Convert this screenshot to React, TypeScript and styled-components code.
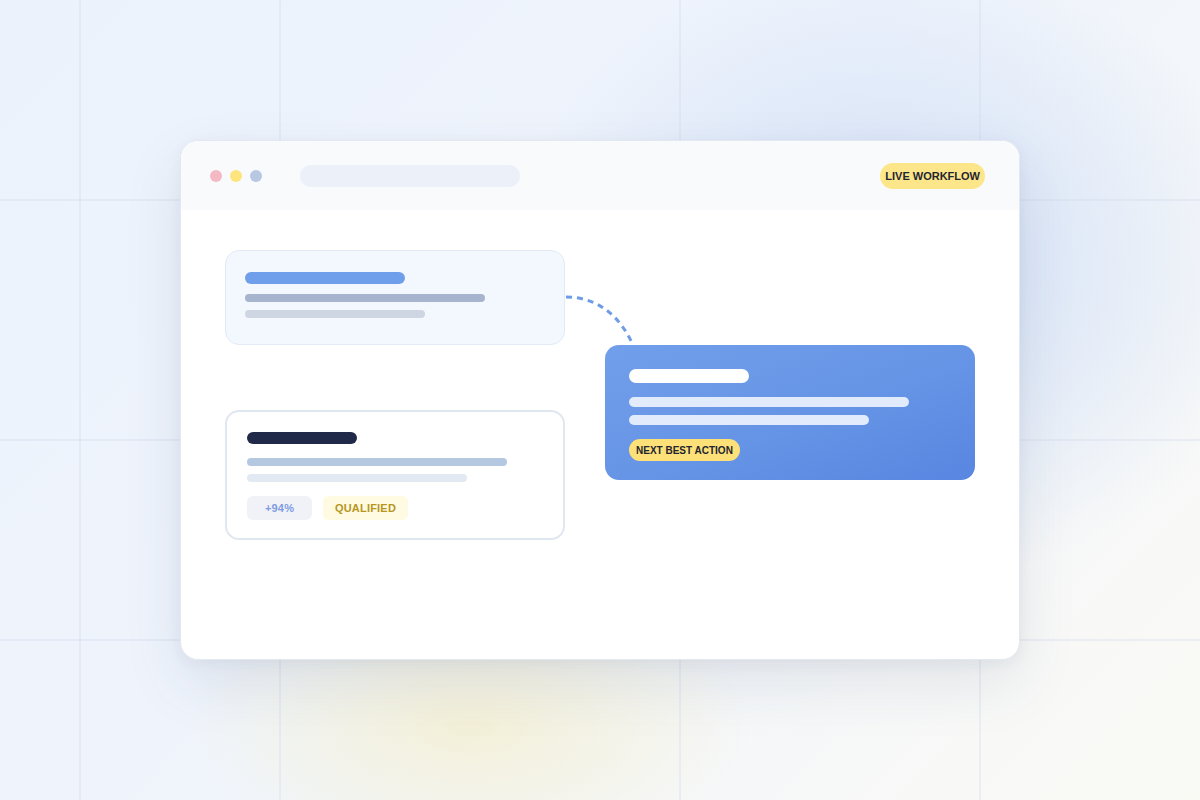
import React from 'react';
import styled, { createGlobalStyle } from 'styled-components';

const GlobalStyle = createGlobalStyle`
  html, body {
    margin: 0;
    padding: 0;
  }
  body {
    font-family: "Liberation Sans", Arial, sans-serif;
  }
`;

const gridLine = (dir: 'right' | 'bottom', at: number) =>
  `linear-gradient(to ${dir}, transparent ${at - 1}px, rgba(200, 212, 230, 0.28) ${at - 1}px, rgba(200, 212, 230, 0.28) ${at + 1}px, transparent ${at + 1}px)`;

const Page = styled.div`
  position: relative;
  width: 1200px;
  height: 800px;
  overflow: hidden;
  display: flex;
  align-items: center;
  justify-content: center;
  background:
    ${gridLine('right', 80)},
    ${gridLine('right', 280)},
    ${gridLine('right', 680)},
    ${gridLine('right', 980)},
    ${gridLine('bottom', 200)},
    ${gridLine('bottom', 440)},
    ${gridLine('bottom', 640)},
    radial-gradient(ellipse 380px 320px at 890px 270px, rgba(206, 221, 246, 0.95), rgba(206, 221, 246, 0) 100%),
    radial-gradient(ellipse 280px 140px at 470px 725px, rgba(244, 239, 210, 0.85), rgba(244, 239, 210, 0) 100%),
    linear-gradient(135deg, #ecf2fc 0%, #eff4fc 45%, #f7f8f8 80%, #fafaf5 100%);
`;

const Window = styled.div`
  width: 840px;
  height: 520px;
  background: #ffffff;
  border: 1px solid #e4e9f1;
  border-radius: 18px;
  box-sizing: border-box;
  overflow: hidden;
  box-shadow: 0 24px 60px rgba(40, 60, 100, 0.1), 0 4px 14px rgba(40, 60, 100, 0.05);
  display: flex;
  flex-direction: column;
`;

const TitleBar = styled.div`
  height: 69px;
  flex-shrink: 0;
  background: #f8fafc;
  display: flex;
  align-items: center;
  padding: 0 34px 0 29px;
`;

const Dots = styled.div`
  display: flex;
  gap: 8px;
`;

const Dot = styled.span<{ $color: string }>`
  width: 12px;
  height: 12px;
  border-radius: 50%;
  background: ${p => p.$color};
`;

const UrlBar = styled.div`
  margin-left: 38px;
  width: 220px;
  height: 22px;
  border-radius: 11px;
  background: #ecf1f9;
`;

const Pill = styled.span<{ $bg: string; $fg: string; $size: number; $h: number }>`
  display: inline-flex;
  align-items: center;
  justify-content: center;
  height: ${p => p.$h}px;
  padding: 0 5px;
  border-radius: ${p => p.$h / 2}px;
  background: ${p => p.$bg};
  color: ${p => p.$fg};
  font-size: ${p => p.$size}px;
  font-weight: 700;
  white-space: nowrap;
`;

const LiveBadge = styled(Pill)`
  margin-left: auto;
`;

const Canvas = styled.div`
  position: relative;
  flex: 1;
  display: grid;
  grid-template-columns: 340px 370px;
  column-gap: 40px;
  align-items: start;
  padding: 40px 44px 0 44px;
`;

const LeftColumn = styled.div`
  display: flex;
  flex-direction: column;
  gap: 65px;
`;

const Card = styled.div<{ $variant: 'soft' | 'plain' | 'accent' }>`
  box-sizing: border-box;
  border-radius: 14px;
  display: flex;
  flex-direction: column;
  ${p =>
    p.$variant === 'soft'
      ? `background: #f3f7fe; border: 1px solid #e2eaf6; padding: 21px 19px 26px;`
      : p.$variant === 'plain'
      ? `background: #ffffff; border: 2px solid #e1e7f0; padding: 20px 20px 18px;`
      : `background: linear-gradient(160deg, #729fea 0%, #6795e6 50%, #5886e1 100%);
         padding: 24px 24px 19px; margin-top: 95px; height: 135px;`}
`;

const Bar = styled.div<{ $w: number; $h: number; $color: string; $gap?: number }>`
  width: ${p => p.$w}px;
  height: ${p => p.$h}px;
  border-radius: ${p => p.$h / 2}px;
  background: ${p => p.$color};
  margin-top: ${p => p.$gap ?? 0}px;
  flex-shrink: 0;
`;

const TagRow = styled.div`
  display: flex;
  gap: 11px;
  margin-top: 14px;
`;

const Tag = styled.span<{ $bg: string; $fg: string; $w: number }>`
  display: inline-flex;
  align-items: center;
  justify-content: center;
  width: ${p => p.$w}px;
  height: 24px;
  border-radius: 6px;
  background: ${p => p.$bg};
  color: ${p => p.$fg};
  font-size: 11px;
  font-weight: 700;
  letter-spacing: 0.2px;
`;

const ActionBadge = styled(Pill)`
  margin-top: 14px;
  align-self: flex-start;
  padding: 0 7px;
`;

const Connector = styled.svg`
  position: absolute;
  left: 0;
  top: 0;
  width: 100%;
  height: 100%;
  pointer-events: none;
  overflow: visible;
`;

export default function App() {
  return (
    <>
      <GlobalStyle />
      <Page>
        <Window>
          <TitleBar>
            <Dots>
              <Dot $color="#f4b9c5" />
              <Dot $color="#fde47c" />
              <Dot $color="#b9c8e2" />
            </Dots>
            <UrlBar />
            <LiveBadge $bg="#fde68a" $fg="#1f2530" $size={11} $h={26}>
              LIVE WORKFLOW
            </LiveBadge>
          </TitleBar>
          <Canvas>
            <Connector viewBox="0 0 838 449">
              <path
                d="M385 87 C 415 87, 438 104, 452 135"
                fill="none"
                stroke="#6f9ce6"
                strokeWidth="3"
                strokeDasharray="6 5"
              />
            </Connector>
            <LeftColumn>
              <Card $variant="soft">
                <Bar $w={160} $h={12} $color="#6f9eea" />
                <Bar $w={240} $h={8} $color="#a6b5cd" $gap={10} />
                <Bar $w={180} $h={8} $color="#cdd6e2" $gap={8} />
              </Card>
              <Card $variant="plain">
                <Bar $w={110} $h={12} $color="#202a48" />
                <Bar $w={260} $h={8} $color="#b5c8e1" $gap={14} />
                <Bar $w={220} $h={8} $color="#e3e9f2" $gap={8} />
                <TagRow>
                  <Tag $bg="#f1f1f8" $fg="#7d9de0" $w={65}>+94%</Tag>
                  <Tag $bg="#fefbe2" $fg="#b8961e" $w={85}>QUALIFIED</Tag>
                </TagRow>
              </Card>
            </LeftColumn>
            <Card $variant="accent">
              <Bar $w={120} $h={14} $color="#ffffff" />
              <Bar $w={280} $h={10} $color="#e2ebfb" $gap={14} />
              <Bar $w={240} $h={10} $color="#e2ebfb" $gap={8} />
              <ActionBadge $bg="#fde077" $fg="#222530" $size={10} $h={22}>
                NEXT BEST ACTION
              </ActionBadge>
            </Card>
          </Canvas>
        </Window>
      </Page>
    </>
  );
}
